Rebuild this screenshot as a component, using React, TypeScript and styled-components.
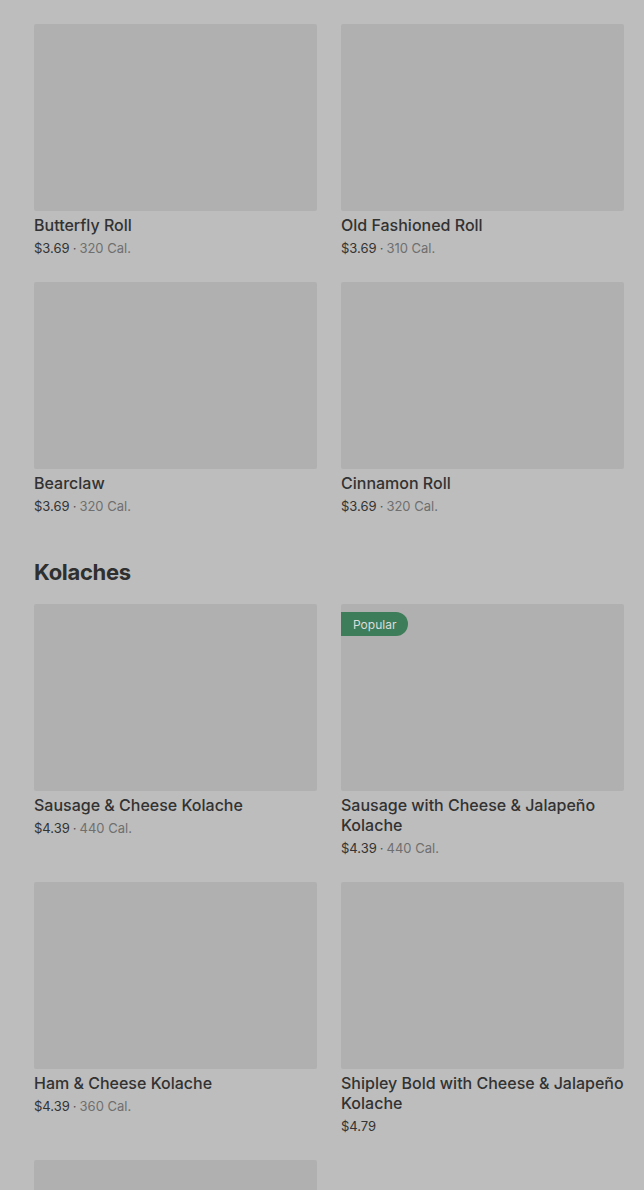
import * as React from "react";
import styled, { createGlobalStyle } from "styled-components";

const Global = createGlobalStyle`
  html, body {
    margin: 0;
    padding: 0;
    background: #bdbdbd;
  }
  body {
    font-family: Inter, "Noto Sans", "Liberation Sans", sans-serif;
    overflow: hidden;
  }
`;

const Page = styled.div`
  padding: 24px 20px 0 34px;
`;

const Section = styled.section`
  margin-bottom: 39px;
`;

const SectionTitle = styled.h2`
  margin: 0 0 15px;
  font-size: 22px;
  line-height: 34px;
  font-weight: 700;
  color: #2f2f2f;
  letter-spacing: -0.3px;
`;

const Grid = styled.div`
  display: grid;
  grid-template-columns: 1fr 1fr;
  column-gap: 24px;
  row-gap: 24px;
`;

const Card = styled.div`
  display: flex;
  flex-direction: column;
  position: relative;
`;

const Media = styled.div`
  height: 187px;
  background: #b0b0b0;
  border-radius: 2px;
`;

const Badge = styled.span`
  position: absolute;
  top: 8px;
  left: 0;
  height: 24px;
  padding: 0 12px;
  display: flex;
  align-items: center;
  background: #3e7d59;
  color: #dcdcdc;
  font-size: 12px;
  border-radius: 0 12px 12px 0;
`;

const Title = styled.div`
  margin-top: 4px;
  font-size: 16px;
  line-height: 20px;
  font-weight: 500;
  color: #323232;
`;

const Meta = styled.div`
  margin-top: 3px;
  font-size: 13px;
  line-height: 20px;
  color: #333;
`;

const Dot = styled.span`
  margin: 0 3px;
  color: #555;
`;

const Cal = styled.span`
  color: #6f6f6f;
`;

type Item = { name: string; price: string; cal?: string; popular?: boolean };

const rolls: Item[] = [
  { name: "Butterfly Roll", price: "$3.69", cal: "320 Cal." },
  { name: "Old Fashioned Roll", price: "$3.69", cal: "310 Cal." },
  { name: "Bearclaw", price: "$3.69", cal: "320 Cal." },
  { name: "Cinnamon Roll", price: "$3.69", cal: "320 Cal." },
];

const kolaches: Item[] = [
  { name: "Sausage & Cheese Kolache", price: "$4.39", cal: "440 Cal." },
  {
    name: "Sausage with Cheese & Jalapeño Kolache",
    price: "$4.39",
    cal: "440 Cal.",
    popular: true,
  },
  { name: "Ham & Cheese Kolache", price: "$4.39", cal: "360 Cal." },
  { name: "Shipley Bold with Cheese & Jalapeño Kolache", price: "$4.79" },
  { name: "", price: "" },
];

const ItemCard: React.FC<{ item: Item }> = ({ item }) => (
  <Card>
    <Media />
    {item.popular && <Badge>Popular</Badge>}
    {item.name && <Title>{item.name}</Title>}
    {item.price && (
      <Meta>
        {item.price}
        {item.cal && (
          <>
            <Dot>·</Dot>
            <Cal>{item.cal}</Cal>
          </>
        )}
      </Meta>
    )}
  </Card>
);

export default function App() {
  return (
    <Page>
      <Global />
      <Section>
        <Grid>
          {rolls.map((r) => (
            <ItemCard key={r.name} item={r} />
          ))}
        </Grid>
      </Section>
      <Section>
        <SectionTitle>Kolaches</SectionTitle>
        <Grid>
          {kolaches.map((k, i) => (
            <ItemCard key={i} item={k} />
          ))}
        </Grid>
      </Section>
    </Page>
  );
}
